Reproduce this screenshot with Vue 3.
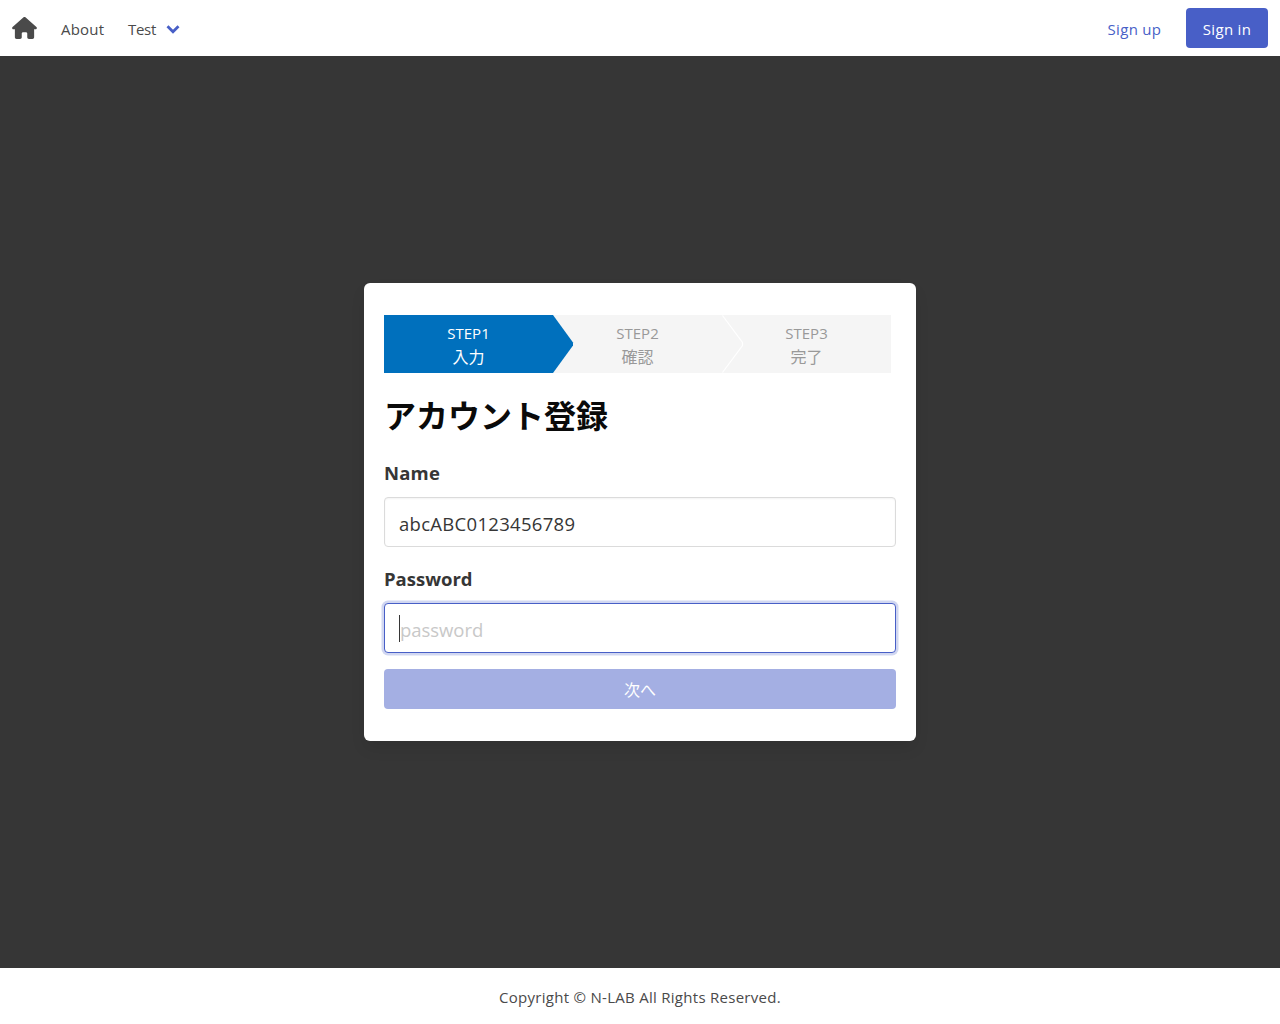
<script setup>
import { ref } from 'vue'

const steps = [
  { title: 'STEP1', label: '入力', active: true },
  { title: 'STEP2', label: '確認', active: false },
  { title: 'STEP3', label: '完了', active: false },
]
const name = ref('abcABC0123456789')
</script>

<template>
  <div class="page">
    <nav class="navbar">
      <a class="home" aria-label="Home">
        <svg viewBox="0 0 576 512" width="25" height="22"><path fill="currentColor" d="M575.8 255.5c0 18-15 32.1-32 32.1h-32l.7 160.2c0 2.7-.2 5.4-.5 8.1V472c0 22.1-17.9 40-40 40H456c-1.1 0-2.2 0-3.3-.1c-1.4 .1-2.8 .1-4.2 .1H416 392c-22.1 0-40-17.9-40-40V448 384c0-17.7-14.3-32-32-32H256c-17.7 0-32 14.3-32 32v64 24c0 22.1-17.9 40-40 40H160 128.1c-1.5 0-3-.1-4.5-.2c-1.2 .1-2.4 .2-3.6 .2H104c-22.1 0-40-17.9-40-40V360c0-.9 0-1.9 .1-2.8V287.6H32c-18 0-32-14-32-32.1c0-9 3-17 10-24L266.4 8c7-7 15-8 22-8s15 2 21 7L564.8 231.5c8 7 12 15 11 24z" /></svg>
      </a>
      <a class="link about">About</a>
      <a class="link test">Test</a>
      <svg class="arrow" viewBox="0 0 14 9" width="14" height="9"><path d="M1.5 1.2L7 6.7L12.5 1.2" fill="none" stroke="#485fc7" stroke-width="2.8" /></svg>
      <a class="link signup">Sign up</a>
      <a class="signin">Sign in</a>
    </nav>

    <main class="hero">
      <section class="box">
        <ol class="steps">
          <li v-for="(s, i) in steps" :key="s.title" class="step" :class="{ active: s.active }">
            <span class="step-title">{{ s.title }}</span>
            <span class="step-label">{{ s.label }}</span>
            <svg v-if="i < steps.length - 1" class="tip" viewBox="0 0 22 58" width="22" height="58">
              <path v-if="s.active" d="M0 0L20 27.5V30.5L0 58Z" fill="#0070bd" />
              <path v-else d="M0.5 0.5L20.5 27.5V30.5L0.5 57.5" fill="none" stroke="#fff" stroke-width="1.2" />
            </svg>
          </li>
        </ol>
        <h1 class="title">アカウント登録</h1>
        <label class="label name-label">Name</label>
        <input v-model="name" class="input" type="text">
        <label class="label pass-label">Password</label>
        <div class="input focused"><span class="caret"></span><span class="placeholder">password</span></div>
        <button class="next" disabled>次へ</button>
      </section>
    </main>

    <footer class="footer">Copyright © N-LAB All Rights Reserved.</footer>
  </div>
</template>

<style>
body {
  margin: 0;
}
</style>

<style scoped>
.page {
  display: flex;
  flex-direction: column;
  height: 1024px;
  background: #363636;
  color: #4a4a4a;
  font-family: "Open Sans", "Noto Sans CJK JP", sans-serif;
  font-size: 15px;
  line-height: 24px;
}
.navbar {
  display: flex;
  align-items: center;
  box-sizing: border-box;
  height: 56px;
  padding: 0 12px;
  background: #fff;
}
.home {
  display: flex;
  margin-right: 24px;
}
.link {
  padding-top: 2px;
}
.about {
  width: 67px;
  letter-spacing: 0.2px;
}
.test {
  width: 37.5px;
  letter-spacing: -0.3px;
}
.arrow {
  margin-top: 3px;
}
.signup {
  margin-left: auto;
  margin-right: 24.7px;
  color: #485fc7;
  letter-spacing: 0.3px;
}
.signin {
  box-sizing: border-box;
  width: 82px;
  height: 40px;
  padding-top: 9px;
  border-radius: 4px;
  background: #485fc7;
  color: #fff;
  text-align: center;
  letter-spacing: 0.3px;
}
.hero {
  display: flex;
  flex: 1;
  align-items: center;
  justify-content: center;
}
.box {
  box-sizing: border-box;
  width: 552px;
  height: 458px;
  padding: 32px 20px;
  border-radius: 6px;
  background: #fff;
  box-shadow: 0 8px 16px -2px rgba(10, 10, 10, 0.1);
}
.steps {
  display: flex;
  height: 58px;
  margin: 0 0 23px;
  padding: 0;
  list-style: none;
}
.step {
  position: relative;
  display: flex;
  flex-direction: column;
  box-sizing: border-box;
  width: 169px;
  padding-top: 6px;
  background: #f5f5f5;
  color: #999;
  text-align: center;
}
.step.active {
  background: #0070bd;
  color: #fff;
}
.step-label {
  font-family: "Noto Sans CJK JP", sans-serif;
  font-size: 16px;
  line-height: 22px;
}
.tip {
  position: absolute;
  z-index: 1;
  top: 0;
  left: 100%;
}
.title {
  margin: 0 0 25px;
  color: #0a0a0a;
  font-family: "Noto Sans CJK JP", sans-serif;
  font-size: 32px;
  font-weight: 700;
  line-height: 36px;
}
.label {
  display: block;
  box-sizing: border-box;
  height: 30px;
  margin-bottom: 10px;
  padding-top: 1px;
  color: #363636;
  font-size: 18.5px;
  font-weight: 700;
  line-height: 30px;
}
.name-label {
  letter-spacing: 0.2px;
}
.input {
  display: flex;
  align-items: center;
  box-sizing: border-box;
  width: 100%;
  height: 50px;
  margin: 0 0 16px;
  padding: 3px 14px 0;
  border: 1px solid #dbdbdb;
  border-radius: 4px;
  outline: none;
  background: #fff;
  box-shadow: inset 0 1px 2px rgba(10, 10, 10, 0.05);
  color: #363636;
  font-family: "Open Sans", sans-serif;
  font-size: 18.5px;
  letter-spacing: 0.3px;
}
.focused {
  padding-top: 0;
  border-color: #485fc7;
  box-shadow: 0 0 0 2.5px rgba(72, 95, 199, 0.25);
  letter-spacing: -0.05px;
}
.caret {
  width: 1px;
  height: 27px;
  background: #363636;
}
.placeholder {
  padding-top: 3px;
  color: #c8c8c8;
}
.next {
  display: block;
  width: 100%;
  height: 40px;
  padding: 0;
  border: 0;
  border-radius: 4px;
  background: #a4afe3;
  color: #fff;
  font-family: "Noto Sans CJK JP", sans-serif;
  font-size: 16px;
  line-height: 38px;
}
.footer {
  height: 42px;
  padding-top: 14px;
  background: #fff;
  text-align: center;
  line-height: 30px;
  letter-spacing: 0.28px;
}
</style>
